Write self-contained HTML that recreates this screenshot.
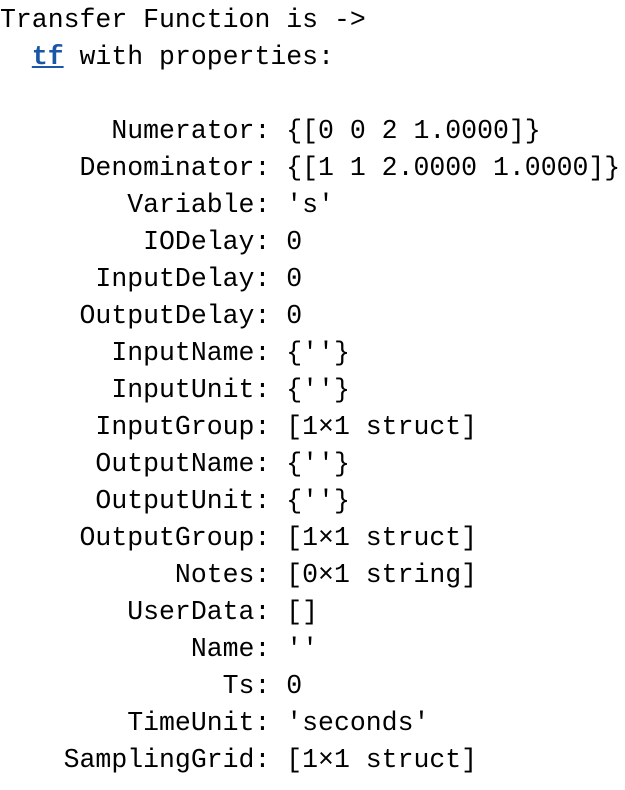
<!DOCTYPE html>
<html><head><style>
html,body{margin:0;padding:0;background:#fff;width:625px;height:790px;overflow:hidden}
pre{margin:0;padding:0;font-family:"Liberation Mono",monospace;font-size:26.5px;line-height:37px;color:#000;position:absolute;left:0;top:2px}
a{color:#1a56a6;font-weight:bold;text-decoration:underline}
</style></head><body>
<pre>Transfer Function is -&gt;
  <a>tf</a> with properties:

       Numerator: {[0 0 2 1.0000]}
     Denominator: {[1 1 2.0000 1.0000]}
        Variable: 's'
         IODelay: 0
      InputDelay: 0
     OutputDelay: 0
       InputName: {''}
       InputUnit: {''}
      InputGroup: [1×1 struct]
      OutputName: {''}
      OutputUnit: {''}
     OutputGroup: [1×1 struct]
           Notes: [0×1 string]
        UserData: []
            Name: ''
              Ts: 0
        TimeUnit: 'seconds'
    SamplingGrid: [1×1 struct]</pre>
</body></html>
